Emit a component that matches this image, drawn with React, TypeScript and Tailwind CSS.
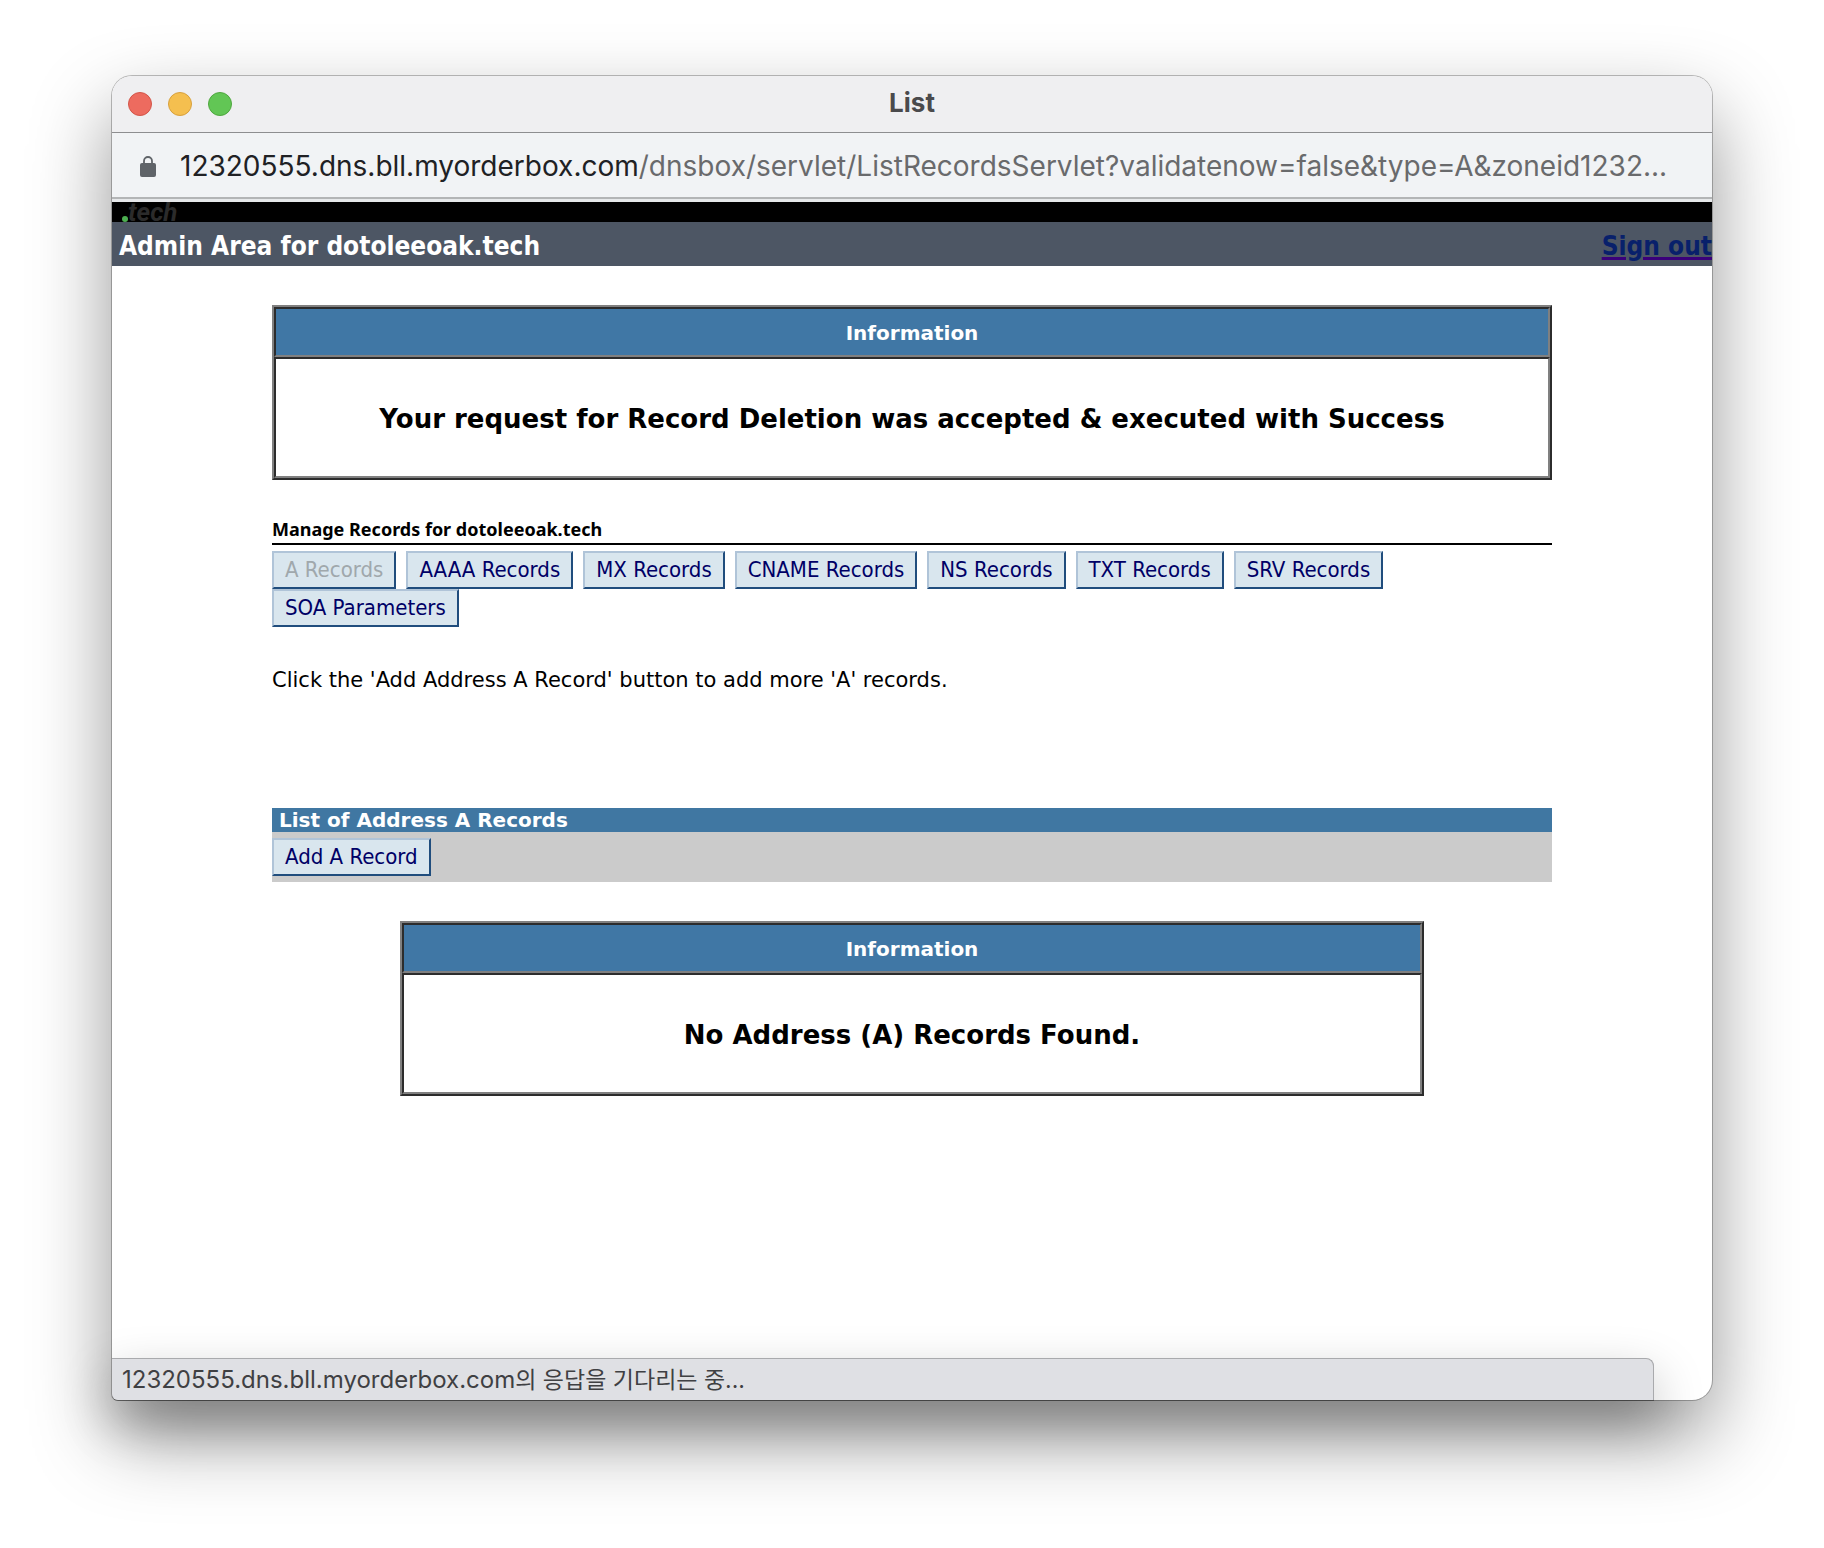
import React from "react";

const recordTypes = [
  "A Records",
  "AAAA Records",
  "MX Records",
  "CNAME Records",
  "NS Records",
  "TXT Records",
  "SRV Records",
  "SOA Parameters",
];

function ActionButton({ label, disabled = false }: { label: string; disabled?: boolean }) {
  return (
    <button
      type="button"
      disabled={disabled}
      className="h-[38px] whitespace-nowrap border-2 border-t-[#b0c4d8] border-l-[#b0c4d8] border-r-[#204d7d] border-b-[#204d7d] bg-[#d9e6ee] px-[11px] font-['DejaVu_Sans_Condensed','DejaVu_Sans',sans-serif] text-[22px] leading-7 text-[#000066] disabled:text-[#a0a8ac]"
    >
      {label}
    </button>
  );
}

function InfoTable({ message, className }: { message: string; className: string }) {
  return (
    <table
      className={`${className} mx-auto border-separate border-spacing-0 border-2 border-t-[#808080] border-l-[#808080] border-r-[#2c2c2c] border-b-[#2c2c2c] text-center font-bold`}
    >
      <thead>
        <tr>
          <th
            scope="col"
            className="h-[50px] border-2 border-t-[#2c2c2c] border-l-[#2c2c2c] border-r-[#808080] border-b-[#808080] bg-[#4077a5] p-0 pt-0.5 text-xl leading-6 text-white"
          >
            Information
          </th>
        </tr>
      </thead>
      <tbody>
        <tr>
          <td className="h-[121px] border-2 border-t-[#2c2c2c] border-l-[#2c2c2c] border-r-[#808080] border-b-[#808080] p-0 pt-0.5 text-[26px] leading-8 text-black">
            {message}
          </td>
        </tr>
      </tbody>
    </table>
  );
}

function TitleBar() {
  return (
    <header className="grid h-14 grid-cols-[1fr_auto_1fr] items-center rounded-t-[20px] bg-[#efeff1] px-4">
      <div className="flex gap-4">
        <button type="button" aria-label="Close" className="size-6 rounded-full border border-[#d35549] bg-[#ed6b5f]" />
        <button type="button" aria-label="Minimize" className="size-6 rounded-full border border-[#d8a03d] bg-[#f5bf4f]" />
        <button type="button" aria-label="Zoom" className="size-6 rounded-full border border-[#4fa73f] bg-[#62c655]" />
      </div>
      <h1 className="pb-0.5 font-['Inter',sans-serif] text-[26px] font-bold leading-8 text-[#4a4a4c]">List</h1>
    </header>
  );
}

function AddressBar() {
  return (
    <div className="flex h-[65px] items-center border-t border-[#8d8e90] bg-[#f1f3f5] pl-7 pt-0.5">
      <svg viewBox="0 0 16 21" className="h-[21px] w-4 shrink-0" aria-label="Secure" role="img">
        <path d="M4 9V5a4 4 0 0 1 8 0v4" fill="none" stroke="#5f6368" strokeWidth="1.8" />
        <rect x="0" y="7" width="16" height="14" rx="2" fill="#5f6368" />
      </svg>
      <p className="ml-6 whitespace-nowrap font-['Inter',sans-serif] text-[28px] leading-8 text-[#696a6c]">
        <span className="text-[#202124]">12320555.dns.bll.myorderbox.com</span>
        /dnsbox/servlet/ListRecordsServlet?validatenow=false&amp;type=A&amp;zoneid1232...
      </p>
    </div>
  );
}

export default function App() {
  return (
    <div className="flex min-h-screen flex-col bg-white px-28 pb-[148px] pt-[76px] font-['DejaVu_Sans',sans-serif] text-black">
      <div className="flex flex-1 flex-col rounded-[20px] rounded-bl-md bg-white shadow-[0_0_0_1px_rgba(0,0,0,0.25),0_36px_80px_rgba(0,0,0,0.42)]">
        <TitleBar />
        <AddressBar />
        <div className="h-[5px] border-t-2 border-[#b3b5b6] bg-[#e6e8ea]" />
        <div className="flex h-5 items-end bg-black pl-2.5">
          <span className="size-1.5 rounded-full bg-[#4caf50]" />
          <span className="font-['Roboto',sans-serif] text-[26px] font-bold italic leading-5 text-[#2b2b2b]">tech</span>
        </div>
        <div className="flex h-11 items-center justify-between bg-[#4d5664] pl-[7px] pt-1 font-['DejaVu_Sans_Condensed','DejaVu_Sans',sans-serif] text-[26px] font-bold leading-8">
          <h2 className="text-white">Admin Area for dotoleeoak.tech</h2>
          <a href="#sign-out" className="text-[#08206b] underline decoration-[#3a007a] decoration-3">
            Sign out
          </a>
        </div>

        <main className="mx-auto flex w-4/5 flex-1 flex-col pt-[39px]">
          <InfoTable className="w-full" message="Your request for Record Deletion was accepted & executed with Success" />

          <h3 className="mt-9 border-b-2 border-black pb-px font-['Noto_Sans',sans-serif] text-[18px] font-bold leading-[26px]">
            Manage Records for dotoleeoak.tech
          </h3>
          <nav className="mt-1.5 flex flex-wrap gap-x-2.5">
            {recordTypes.map((label, i) => (
              <ActionButton key={label} label={label} disabled={i === 0} />
            ))}
          </nav>

          <p className="mt-9 text-[21px] leading-[34px]">Click the 'Add Address A Record' button to add more 'A' records.</p>

          <section className="mt-[111px] bg-[#cbcbcb] pb-1.5">
            <h3 className="mb-1.5 bg-[#4077a2] pl-[7px] text-xl font-bold leading-6 text-white">
              List of Address A Records
            </h3>
            <div className="flex">
              <ActionButton label="Add A Record" />
            </div>
          </section>

          <div className="mt-[39px]">
            <InfoTable className="w-4/5" message="No Address (A) Records Found." />
          </div>
        </main>

        <footer className="mr-[58px] flex h-[42px] items-center rounded-bl-md rounded-tr-lg border-r border-t border-[#a9aaad] bg-[#dfe0e4] pl-2.5 text-[#3f4043] shadow-[0_1px_0_rgba(0,0,0,0.35),0_20px_50px_rgba(0,0,0,0.28)]">
          <p className="font-['Inter','Noto_Sans_CJK_KR',sans-serif] text-2xl leading-8">
            12320555.dns.bll.myorderbox.com<span className="text-[23px]">의 응답을 기다리는 중...</span>
          </p>
        </footer>
      </div>
    </div>
  );
}
